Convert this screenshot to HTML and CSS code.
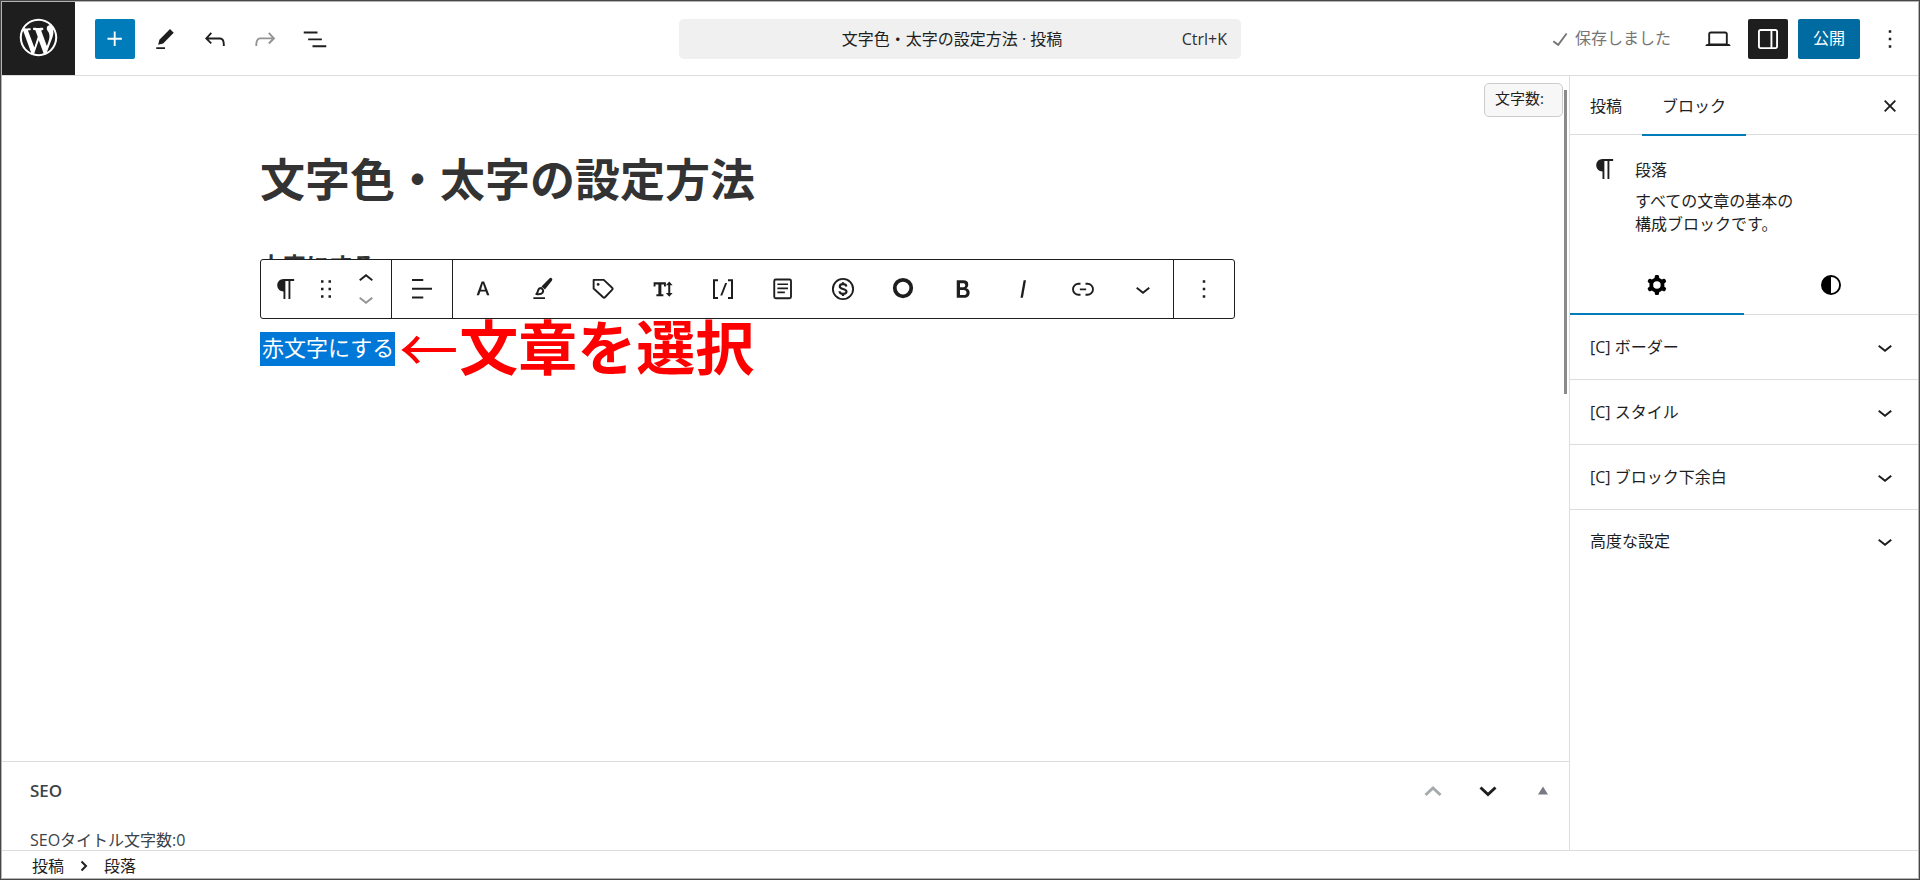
FILE: index.html
```html
<!DOCTYPE html>
<html lang="ja">
<head>
<meta charset="utf-8">
<title>文字色・太字の設定方法 · 投稿</title>
<link rel="stylesheet" href="styles.css">
</head>
<body>
<div class="app">
  <header class="header">
    <a class="site-logo" href="#" aria-label="WordPress">
      <svg viewBox="-2 -2 24 24"><path d="M20 10c0-5.51-4.49-10-10-10C4.48 0 0 4.49 0 10c0 5.52 4.48 10 10 10 5.51 0 10-4.48 10-10zM7.78 15.37L4.37 6.22c.55-.02 1.17-.08 1.17-.08.5-.06.44-1.13-.06-1.11 0 0-1.45.11-2.37.11-.18 0-.37 0-.58-.01C4.12 2.69 6.87 1.11 10 1.11c2.33 0 4.45.87 6.05 2.34-.68-.11-1.65.39-1.65 1.58 0 .74.45 1.36.9 2.1.35.61.55 1.36.55 2.46 0 1.49-1.4 5-1.4 5l-3.03-8.37c.54-.02.82-.17.82-.17.5-.05.44-1.25-.06-1.22 0 0-1.44.12-2.38.12-.87 0-2.33-.12-2.33-.12-.5-.03-.56 1.2-.06 1.22l.92.08 1.26 3.41zM17.41 10c.24-.64.74-1.87.43-4.25.7 1.29 1.05 2.71 1.05 4.25 0 3.29-1.73 6.24-4.4 7.78.97-2.59 1.94-5.2 2.92-7.78zM6.1 18.09C3.12 16.65 1.11 13.53 1.11 10c0-1.3.23-2.48.72-3.59C3.25 10.3 4.67 14.2 6.1 18.09zm4.03-6.63l2.58 6.98c-.86.29-1.76.45-2.71.45-.79 0-1.57-.11-2.29-.33.81-2.38 1.62-4.74 2.42-7.1z"/></svg>
    </a>
    <div class="header-tools">
      <button class="icon-btn primary" aria-label="ブロック挿入"><svg viewBox="0 0 24 24"><path d="M11 12.5V17.5H12.5V12.5H17.5V11H12.5V6H11V11H6V12.5H11Z"/></svg></button>
      <button class="icon-btn" aria-label="ツール"><svg viewBox="0 0 24 24"><path d="m19 7-3-3-8.5 8.5-1 4 4-1L19 7Zm-7 11.5H5V20h7v-1.5Z"/></svg></button>
      <button class="icon-btn" aria-label="元に戻す"><svg viewBox="0 0 24 24"><path d="M18.3 11.7c-.6-.6-1.4-.9-2.3-.9H6.7l2.9-3.3-1.1-1-4.5 5L8.5 16l1-1-2.7-2.7H16c.5 0 .9.2 1.3.5 1 1 1 3.4 1 4.5v.3h1.5v-.2c0-1.5 0-4.3-1.5-5.7z"/></svg></button>
      <button class="icon-btn muted" aria-label="やり直す"><svg viewBox="0 0 24 24"><path d="M15.6 6.5l-1.1 1 2.9 3.3H8c-.9 0-1.7.3-2.3.9-1.4 1.5-1.4 4.2-1.4 5.6v.2h1.5v-.3c0-1.1 0-3.5 1-4.5.3-.3.7-.5 1.3-.5h9.2L14.5 15l1.1 1.1 4.6-4.6-4.6-5z"/></svg></button>
      <button class="icon-btn" aria-label="ドキュメント概観"><svg viewBox="0 0 24 24"><path d="M3 6h11v1.5H3V6Zm3.5 5.5h11V13h-11v-1.5ZM21 17H10v1.5h11V17Z"/></svg></button>
    </div>
    <button class="command-bar">
      <span></span>
      <span class="command-title">文字色・太字の設定方法 · 投稿</span>
      <span class="command-key">Ctrl+K</span>
    </button>
    <div class="header-settings">
      <span class="saved"><svg viewBox="0 0 24 24"><path d="M16.7 7.1l-6.3 8.5-3.3-2.5-.9 1.2 4.5 3.4L17.9 8z"/></svg><span>保存しました</span></span>
      <button class="icon-btn" aria-label="表示"><svg viewBox="0 0 24 24"><path d="M20.5 16h-.7V8c0-1.1-.9-2-2-2H6.2c-1.1 0-2 .9-2 2v8h-.7c-.8 0-1.5.7-1.5 1.5h20c0-.8-.7-1.5-1.5-1.5zM5.7 8c0-.3.2-.5.5-.5h11.6c.3 0 .5.2.5.5v7.6H5.7V8z"/></svg></button>
      <button class="icon-btn pressed" aria-label="設定"><svg viewBox="0 0 24 24"><path d="M18 4H6c-1.1 0-2 .9-2 2v12c0 1.1.9 2 2 2h12c1.1 0 2-.9 2-2V6c0-1.1-.9-2-2-2zm-4 14.5H6c-.3 0-.5-.2-.5-.5V6c0-.3.2-.5.5-.5h8v13zm4.5-.5c0 .3-.2.5-.5.5h-2.5v-13H18c.3 0 .5.2.5.5v12z"/></svg></button>
      <button class="publish">公開</button>
      <button class="icon-btn" aria-label="オプション"><svg viewBox="0 0 24 24"><path d="M13 19h-2v-2h2v2zm0-6h-2v-2h2v2zm0-6h-2V5h2v2z"/></svg></button>
    </div>
  </header>

  <div class="body">
    <main class="editor">
      <section class="canvas">
        <h1 class="post-title">文字色・太字の設定方法</h1>
        <p class="para strong">太字にする</p>
        <div class="para current">
          <span class="selected">赤文字にする</span>
          <span class="note"><span class="note-arrow">←</span>文章を選択</span>
          <div class="toolbar" role="toolbar" aria-label="ブロックツール">
            <div class="group first">
              <button aria-label="段落"><svg viewBox="0 0 24 24"><path d="m9.99609 14v-.2251l.00391.0001v6.225h1.5v-14.5h2.5v14.5h1.5v-14.5h3v-1.5h-8.50391c-2.76142 0-5 2.23858-5 5 0 2.7614 2.23858 5 5 5z"/></svg></button>
              <button aria-label="ドラッグ"><svg viewBox="0 0 24 24"><path d="M8 7h2V5H8v2zm0 6h2v-2H8v2zm0 6h2v-2H8v2zm6-14v2h2V5h-2zm0 8h2v-2h-2v2zm0 6h2v-2h-2v2z"/></svg></button>
              <div class="movers">
                <button aria-label="上に移動"><svg viewBox="0 0 24 24"><path d="M6.5 12.4L12 8l5.5 4.4-.9 1.2L12 10l-4.5 3.6-1-1.2z"/></svg></button>
                <button class="muted" aria-label="下に移動"><svg viewBox="0 0 24 24"><path d="M17.5 11.6L12 16l-5.5-4.4.9-1.2L12 14l4.5-3.6 1 1.2z"/></svg></button>
              </div>
            </div>
            <div class="group">
              <button aria-label="テキストの配置"><svg viewBox="0 0 24 24"><path d="M13 5.5H4V4h9v1.5Zm7 7H4V11h16v1.5Zm-7 7H4V18h9v1.5Z"/></svg></button>
            </div>
            <div class="group">
              <button aria-label="文字"><svg viewBox="0 0 24 24"><path d="M12.9 6h-2l-4 11h1.9l1.1-3h4.2l1.1 3h1.9L12.9 6zm-2.5 6.5l1.5-4.9 1.7 4.9h-3.2z"/></svg></button>
              <button aria-label="マーカー"><svg viewBox="0 0 24 24"><path d="M18.900 3.400c.7.6.7 1.300.2 1.900l-5.600 7-2.700-2.300 6.300-6.400c.6-.6 1.200-.7 1.800-.2z"/><path class="brush" d="M10.700 11.200c-1.400 0-2.400.8-2.700 2.200-.2 1.100-.6 1.900-1.400 2.700 2.100.3 4.200 0 5.100-1.200.8-1.200.4-2.600-1-3.700z"/><path d="M4.300 18.600h9.300v1.400H4.300z"/></svg></button>
              <button aria-label="バッジ"><svg viewBox="0 0 24 24"><path class="line" d="M4.500 4.700h8.100l6.700 6.300c.6.500.6 1 .1 1.500l-5.800 6.100c-.5.500-1 .5-1.500 0l-7.600-7z"/><circle cx="8.100" cy="8.300" r="1.100"/></svg></button>
              <button aria-label="文字サイズ"><svg viewBox="0 0 24 24"><path d="M4.500 6.500h9.800v3.400h-1.500V8.300h-2.100v7.900h1.600v1.600H6.700v-1.600h1.600V8.300H6v1.600H4.500zM17 6l2.700 3h-1.900v6.200h1.900L17 18.200l-2.700-3h1.900V9h-1.900z"/></svg></button>
              <button aria-label="ショートコード"><svg viewBox="0 0 24 24"><path d="M4 4.200h4v1.500H5.600v12.700H8v1.500H4zM20 4.200h-4v1.500h2.400v12.700H16v1.500h4zM13.700 7.200h1.600l-3.900 9.900H9.800z"/></svg></button>
              <button aria-label="テンプレート"><svg viewBox="0 0 24 24"><rect class="line" x="5" y="4.400" width="13.400" height="15" rx="1.200"/><path d="M7.500 7.500h8.500v1.300H7.500zM7.500 10.800h8.500v1.300H7.500zM7.500 14h6v1.300h-6z"/></svg></button>
              <button aria-label="広告"><svg viewBox="0 0 24 24"><circle class="line" cx="12" cy="12" r="8.100"/><path class="dollar" d="M14.700 10c-.2-1.200-1.200-1.900-2.700-1.900s-2.600.7-2.600 1.900c0 2.600 5.400 1.400 5.400 4 0 1.200-1.200 1.900-2.800 1.900s-2.700-.8-2.800-2.100M12 6.500v1.600M12 15.900v1.700"/></svg></button>
              <button aria-label="ランキング"><svg viewBox="0 0 24 24"><circle class="ring" cx="12" cy="11.200" r="6.600"/></svg></button>
              <button aria-label="太字"><svg viewBox="0 0 24 24"><path d="M14.7 11.3c1-.6 1.5-1.6 1.5-3 0-2.3-1.3-3.4-4-3.4H7v14h5.8c1.4 0 2.5-.3 3.3-1 .8-.7 1.2-1.7 1.2-2.9.1-1.9-.8-3.1-2.6-3.7zm-5.1-4h2.3c.6 0 1.1.1 1.4.4.3.3.5.7.5 1.2s-.2 1-.5 1.2c-.3.3-.8.4-1.4.4H9.6V7.3zm4.6 9c-.4.3-1 .4-1.7.4H9.6v-3.9h2.9c.7 0 1.3.2 1.7.5.4.3.6.8.6 1.5s-.2 1.2-.6 1.5z"/></svg></button>
              <button aria-label="イタリック"><svg viewBox="0 0 24 24"><path d="M12.5 5L10 19h1.9l2.5-14z"/></svg></button>
              <button aria-label="リンク"><svg viewBox="0 0 24 24"><path d="M10 17.389H8.444A5.194 5.194 0 1 1 8.444 7H10v1.5H8.444a3.694 3.694 0 0 0 0 7.389H10v1.5ZM14 7h1.556a5.194 5.194 0 0 1 0 10.39H14v-1.5h1.556a3.694 3.694 0 0 0 0-7.39H14V7Zm-4.5 6h5v-1.5h-5V13Z"/></svg></button>
              <button aria-label="さらに表示"><svg viewBox="0 0 24 24"><path d="M17.5 11.6L12 16l-5.5-4.4.9-1.2L12 14l4.5-3.6 1 1.2z"/></svg></button>
            </div>
            <div class="group">
              <button aria-label="オプション"><svg viewBox="0 0 24 24"><path d="M13 19h-2v-2h2v2zm0-6h-2v-2h2v2zm0-6h-2V5h2v2z"/></svg></button>
            </div>
          </div>
        </div>
        <div class="counter">文字数:</div>
        <div class="scroll-thumb"></div>
      </section>
      <section class="metabox">
        <div class="metabox-head">
          <h2>SEO</h2>
          <div class="metabox-actions">
            <button class="faded" aria-label="上に移動"><svg viewBox="0 0 20 20"><path class="thick" d="M2.500 14 10 7l7.500 7"/></svg></button>
            <button aria-label="下に移動"><svg viewBox="0 0 20 20"><path class="thick" d="M2.500 6.500 10 13.500 17.500 6.500"/></svg></button>
            <button class="toggle" aria-label="パネルを切り替え"><svg viewBox="0 0 20 20"><path d="M10 5.500l5 8H5z"/></svg></button>
          </div>
        </div>
        <p>SEOタイトル文字数:0</p>
      </section>
    </main>

    <aside class="sidebar">
      <div class="tabs">
        <button>投稿</button>
        <button class="active">ブロック</button>
        <button class="icon-btn close" aria-label="設定を閉じる"><svg viewBox="0 0 24 24"><path d="M12 13.06l3.712 3.713 1.061-1.06L13.061 12l3.712-3.712-1.06-1.06L12 10.938 8.288 7.227l-1.061 1.06L10.939 12l-3.712 3.712 1.06 1.061L12 13.061z"/></svg></button>
      </div>
      <div class="card">
        <svg viewBox="0 0 24 24"><path d="m9.99609 14v-.2251l.00391.0001v6.225h1.5v-14.5h2.5v14.5h1.5v-14.5h3v-1.5h-8.50391c-2.76142 0-5 2.23858-5 5 0 2.7614 2.23858 5 5 5z"/></svg>
        <div>
          <h2>段落</h2>
          <p>すべての文章の基本の<br>構成ブロックです。</p>
        </div>
      </div>
      <div class="subtabs">
        <button class="active" aria-label="設定"><svg viewBox="0 0 24 24"><path fill-rule="evenodd" d="M10.289 4.836A1 1 0 0111.275 4h1.306a1 1 0 01.987.836l.244 1.466c.787.26 1.503.679 2.108 1.218l1.393-.522a1 1 0 011.216.437l.653 1.13a1 1 0 01-.23 1.273l-1.148.944a6.025 6.025 0 010 2.435l1.149.946a1 1 0 01.23 1.272l-.653 1.13a1 1 0 01-1.216.437l-1.394-.522c-.605.54-1.32.958-2.108 1.218l-.244 1.466a1 1 0 01-.987.836h-1.306a1 1 0 01-.986-.836l-.244-1.466a5.995 5.995 0 01-2.108-1.218l-1.394.522a1 1 0 01-1.217-.436l-.653-1.131a1 1 0 01.23-1.272l1.149-.946a6.026 6.026 0 010-2.435l-1.148-.944a1 1 0 01-.23-1.272l.653-1.131a1 1 0 011.217-.437l1.393.522a5.994 5.994 0 012.108-1.218l.244-1.466zM14.929 12a3 3 0 11-6 0 3 3 0 016 0z"/></svg></button>
        <button aria-label="スタイル"><svg viewBox="0 0 24 24"><path fill-rule="evenodd" d="M20 12a8 8 0 1 1-16 0 8 8 0 0 1 16 0zm-1.5 0a6.5 6.5 0 0 1-6.500 6.500v-13a6.500 6.500 0 0 1 6.500 6.500z"/></svg></button>
      </div>
      <button class="panel">[C] ボーダー<svg viewBox="0 0 24 24"><path d="M17.5 11.6L12 16l-5.5-4.4.9-1.2L12 14l4.5-3.6 1 1.2z"/></svg></button>
      <button class="panel">[C] スタイル<svg viewBox="0 0 24 24"><path d="M17.5 11.6L12 16l-5.5-4.4.9-1.2L12 14l4.5-3.6 1 1.2z"/></svg></button>
      <button class="panel">[C] ブロック下余白<svg viewBox="0 0 24 24"><path d="M17.5 11.6L12 16l-5.5-4.4.9-1.2L12 14l4.5-3.6 1 1.2z"/></svg></button>
      <button class="panel">高度な設定<svg viewBox="0 0 24 24"><path d="M17.5 11.6L12 16l-5.5-4.4.9-1.2L12 14l4.5-3.6 1 1.2z"/></svg></button>
    </aside>
  </div>

  <footer class="breadcrumb">
    <a href="#">投稿</a>
    <svg viewBox="0 0 8 12"><path class="thick" d="M1.500 1.500 6 6l-4.500 4.500"/></svg>
    <a href="#">段落</a>
  </footer>
</div>
</body>
</html>
```

FILE: styles.css
```css
* { box-sizing: border-box; }
body {
  margin: 0;
  color: #1e1e1e;
  font: 16px/24px "Open Sans", "Noto Sans CJK JP", sans-serif;
}
h1, h2, p { margin: 0; }
button {
  padding: 0;
  border: 0;
  background: none;
  color: inherit;
  font: inherit;
  display: flex;
  align-items: center;
  justify-content: center;
}
a { color: inherit; text-decoration: none; }
svg { display: block; flex: none; width: 30px; height: 30px; fill: currentColor; }
.line { fill: none; stroke: currentColor; stroke-width: 1.5; stroke-linejoin: round; }
.brush { fill: none; stroke: currentColor; stroke-width: 1.5; stroke-linejoin: round; }
.dollar { fill: none; stroke: currentColor; stroke-width: 1.7; }
.ring { fill: none; stroke: currentColor; stroke-width: 3; }
.thick { fill: none; stroke: currentColor; stroke-width: 2; }

.app {
  display: flex;
  flex-direction: column;
  height: 100vh;
  border: 1px solid #464648;
  box-shadow: inset 0 0 0 1px #b4b4b4;
  padding: 1px;
}

/* Header */
.header {
  display: grid;
  grid-template-columns: 1fr minmax(0, 562px) 1fr;
  grid-template-areas: "tools command settings";
  align-items: center;
  flex: none;
  height: 74px;
  padding-bottom: 2px;
  border-bottom: 1px solid #ddd;
}
.site-logo {
  grid-area: tools;
  align-self: start;
  display: flex;
  align-items: center;
  justify-content: center;
  width: 73px;
  height: 73px;
  padding-bottom: 2px;
  background: #1e1e1e;
  color: #fff;
}
.site-logo svg { width: 45px; height: 45px; }
.header-tools { grid-area: tools; display: flex; gap: 10px; margin-left: 93px; }
.icon-btn { width: 40px; height: 40px; border-radius: 2px; }
.primary { background: #007cba; color: #fff; }
.pressed { background: #1e1e1e; color: #fff; }
.muted { color: #949494; }
.command-bar {
  grid-area: command;
  display: grid;
  grid-template-columns: 1fr auto 1fr;
  align-items: center;
  height: 40px;
  padding: 0 14px;
  border-radius: 5px;
  background: #f0f0f0;
}
.command-title { padding-right: 16px; }
.command-key { justify-self: end; color: #2f2f2f; }
.header-settings {
  grid-area: settings;
  display: flex;
  align-items: center;
  justify-content: flex-end;
  gap: 10px;
  padding-right: 8px;
}
.saved { display: flex; align-items: center; margin-right: 17px; color: #757575; }
.saved span, .publish { padding-bottom: 2px; }
.publish {
  height: 40px;
  padding-left: 15px;
  padding-right: 15px;
  border-radius: 2px;
  background: #006ba1;
  color: #fff;
}

/* Editor */
.body { display: flex; flex: 1; min-height: 0; }
.editor { display: flex; flex-direction: column; flex: 1; min-width: 0; }
.canvas { position: relative; flex: 1; min-height: 0; padding: 76px 0 0 258px; }
.post-title { color: #333; font-size: 45px; line-height: 56px; font-weight: 700; }
.para { font-size: 22px; line-height: 34px; color: #333; }
.strong { margin-top: 40px; font-size: 23px; font-weight: 700; }
.current { position: relative; display: flex; align-items: flex-start; margin-top: 50px; }
.selected { padding: 0 1px 4px 2px; line-height: 30px; background: #0078d7; color: #fff; }
.note {
  display: flex;
  align-items: flex-start;
  margin-left: 4px;
  color: #f00;
  font-size: 59px;
  line-height: 30px;
  font-weight: 700;
}
.note-arrow { width: 60px; font-family: "Noto Sans CJK JP", sans-serif; font-weight: 400; }
.toolbar {
  position: absolute;
  left: 0;
  bottom: 47px;
  display: flex;
  height: 60px;
  border: 1px solid #1e1e1e;
  border-radius: 3px;
  background: #fff;
  color: #1e1e1e;
}
.group { display: flex; align-items: stretch; }
.group + .group { border-left: 1px solid #1e1e1e; }
.group button { width: 60px; }
.group.first { padding: 0 5px; }
.group.first button { width: 40px; }
.movers { display: flex; flex-direction: column; justify-content: center; }
.movers button { height: 20px; }
.counter {
  position: absolute;
  top: 7px;
  right: 6px;
  width: 79px;
  height: 34px;
  padding: 0 10px;
  border: 1px solid #ccc;
  border-radius: 5px;
  background: #f7f7f7;
  font-size: 15px;
  line-height: 28px;
}
.scroll-thumb { position: absolute; top: 14px; right: 2px; width: 3px; height: 304px; background: #8a8a8a; }

/* Meta box */
.metabox {
  flex: none;
  padding: 17px 16px 0 28px;
  border-top: 1px solid #ddd;
  color: #3c434a;
}
.metabox-head { display: flex; align-items: center; justify-content: space-between; height: 24px; }
.metabox-head h2 { font-size: 17px; font-weight: 600; }
.metabox-actions { display: flex; gap: 35px; color: #1e1e1e; }
.metabox-actions svg { width: 20px; height: 20px; }
.metabox-actions .thick { stroke-width: 3; }
.metabox-actions .faded { color: #a7aaad; }
.metabox-actions .toggle { color: #787c82; }
.metabox p { margin-top: 27px; line-height: 20px; }

/* Sidebar */
.sidebar { flex: none; width: 349px; border-left: 1px solid #ddd; }
.tabs { display: flex; height: 59px; border-bottom: 1px solid #ddd; }
.tabs button { padding: 0 20px; height: 60px; }
.tabs .active, .subtabs .active { box-shadow: inset 0 -2px #007cba; }
.tabs .close { width: 40px; padding: 0; margin-left: auto; margin-right: 8px; }
.card { display: flex; gap: 15px; padding: 20px 20px 0; }
.card h2 { font-size: 16px; font-weight: 400; line-height: 30px; }
.card p { margin-top: 5px; line-height: 23px; }
.card svg { margin-top: -1px; }
.subtabs { display: flex; height: 60px; margin-top: 19px; border-bottom: 1px solid #ddd; color: #000; }
.subtabs button { flex: 1; height: 60px; }
.panel {
  width: 100%;
  height: 65px;
  padding: 0 18px 0 20px;
  justify-content: space-between;
  border-bottom: 1px solid #ddd;
}
.panel:last-child { height: 62px; border-bottom: 0; }

/* Footer */
.breadcrumb {
  display: flex;
  align-items: center;
  flex: none;
  height: 28px;
  padding: 3px 30px 0;
  border-top: 1px solid #ddd;
}
.breadcrumb svg { width: 8px; height: 12px; margin: 0 16px; }
```
